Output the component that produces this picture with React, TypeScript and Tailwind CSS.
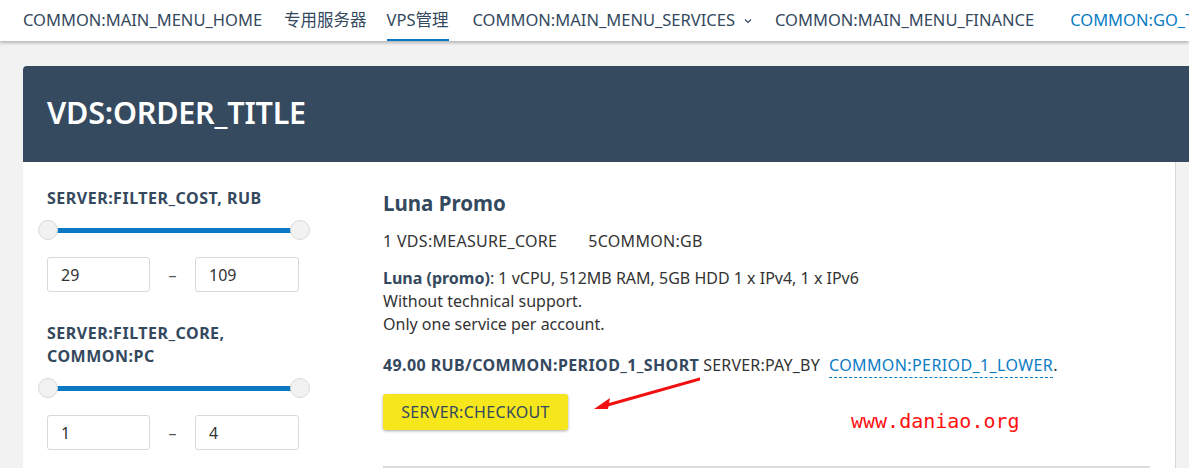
import React from "react";

const font = { fontFamily: '"Noto Sans", "Noto Sans CJK SC", sans-serif' };

function Slider() {
  return (
    <div className="relative -ml-[9px] h-[20px] w-[272px]">
      <div className="absolute left-[10px] right-[10px] top-[8px] h-[5px] bg-[#0a78c2]" />
      <div className="absolute left-0 top-0 h-[20px] w-[20px] rounded-full border border-[#d9d9d9] bg-[#f2f2f2]" />
      <div className="absolute right-0 top-0 h-[20px] w-[20px] rounded-full border border-[#d9d9d9] bg-[#f2f2f2]" />
    </div>
  );
}

function Range({ a, b }: { a: string; b: string }) {
  return (
    <div className="flex items-center">
      <div className="flex h-[35px] w-[103px] items-center rounded-[3px] border border-[#d9d9d9] px-[13px] text-[16px] text-[#333]">{a}</div>
      <div className="w-[45px] text-center text-[16px] text-[#555]">–</div>
      <div className="flex h-[35px] w-[104px] items-center rounded-[3px] border border-[#d9d9d9] px-[13px] text-[16px] text-[#333]">{b}</div>
    </div>
  );
}

export default function App() {
  return (
    <div className="h-[468px] w-[1189px] overflow-hidden bg-[#f2f2f2]" style={font}>
      <nav className="relative z-10 flex h-[41px] items-center overflow-hidden whitespace-nowrap bg-white pl-[23px] text-[16.5px] text-[#34495e] shadow-[0_2px_3px_rgba(0,0,0,0.25)]">
        <span>COMMON:MAIN_MENU_HOME</span>
        <span className="ml-[22px]">专用服务器</span>
        <span className="relative ml-[20px] flex h-full items-center">
          VPS管理
          <span className="absolute bottom-[-2px] left-0 right-0 h-[4px] bg-[#0a78c2]" />
        </span>
        <span className="ml-[24px] flex items-center gap-[9px]">
          COMMON:MAIN_MENU_SERVICES
          <svg width="8" height="6" viewBox="0 0 8 6" className="mt-[1px]"><path d="M1 1.5 L4 4.5 L7 1.5" fill="none" stroke="#34495e" strokeWidth="1.2" /></svg>
        </span>
        <span className="ml-[23px]">COMMON:MAIN_MENU_FINANCE</span>
        <span className="ml-[36px] text-[#0a7cc4]">COMMON:GO_TO_PANEL</span>
      </nav>

      <div className="ml-[23px] mt-[25px]">
        <div className="flex h-[96px] items-center rounded-tl-[4px] bg-[#354a5f] pl-[24px] pb-[2px]">
          <h1 className="text-[30.5px] font-semibold tracking-[-0.2px] text-white">VDS:ORDER_TITLE</h1>
        </div>
        <div className="relative flex h-[320px] w-[1153px] border-r border-[#d6d6d6] bg-white pl-[24px] pt-[25px]">
          <div className="w-[254px] shrink-0">
            <div className="text-[16px] font-bold leading-[23px] tracking-[0.5px] text-[#34495e]">SERVER:FILTER_COST, RUB</div>
            <div className="mt-[10px]"><Slider /></div>
            <div className="mt-[17px]"><Range a="29" b="109" /></div>
            <div className="mt-[30px] text-[16px] font-bold leading-[23px] tracking-[0.5px] text-[#34495e]">SERVER:FILTER_CORE,<br />COMMON:PC</div>
            <div className="mt-[10px]"><Slider /></div>
            <div className="mt-[17px]"><Range a="1" b="4" /></div>
          </div>
          <div className="ml-[82px] flex-1 pr-[25px]">
            <div className="mt-[2px] text-[20.5px] font-bold leading-[28px] text-[#34495e]">Luna Promo</div>
            <div className="mt-[14px] flex text-[16px] leading-[20px] tracking-[0.3px] text-[#333]">
              <span>1 VDS:MEASURE_CORE</span>
              <span className="ml-[31px]">5COMMON:GB</span>
            </div>
            <div className="mt-[16px] text-[16px] leading-[23px] text-[#333]">
              <div><b className="text-[#34495e]">Luna (promo)</b>: 1 vCPU, 512MB RAM, 5GB HDD 1 x IPv4, 1 x IPv6</div>
              <div>Without technical support.</div>
              <div>Only one service per account.</div>
            </div>
            <div className="mt-[18px] flex items-baseline text-[16px] leading-[23px] text-[#333]">
              <b className="tracking-[0.4px] text-[#34495e]">49.00 RUB/COMMON:PERIOD_1_SHORT</b>
              <span className="ml-[4px] tracking-[0.2px]">SERVER:PAY_BY</span>
              <span className="ml-[9px] border-b border-dashed border-[#0a7cc4] tracking-[0.4px] text-[#0a7cc4]">COMMON:PERIOD_1_LOWER</span>
              <span>.</span>
            </div>
            <div className="mt-[16px] flex items-center">
              <button className="h-[36px] w-[185px] rounded-[3px] bg-[#f6e61c] text-[16px] tracking-[0.3px] text-[#34495e] shadow-[0_1px_3px_rgba(0,0,0,0.35)]">SERVER:CHECKOUT</button>
              <svg width="110" height="40" viewBox="0 0 110 40" className="ml-[22px] -mt-[32px]">
                <path d="M110 3 L14 30" stroke="#f01010" strokeWidth="3" strokeLinecap="round" />
                <path d="M4 33 L20 22 L18 33 Z" fill="#f01010" />
              </svg>
            </div>
            <div className="absolute left-[828px] top-[244px] text-[20px] text-[#ff1010]" style={{ fontFamily: '"DejaVu Sans Mono", monospace' }}>www.daniao.org</div>
            <div className="absolute left-[360px] top-[304px] h-[2px] w-[767px] bg-[#dcdcdc]" />
          </div>
        </div>
      </div>
    </div>
  );
}
